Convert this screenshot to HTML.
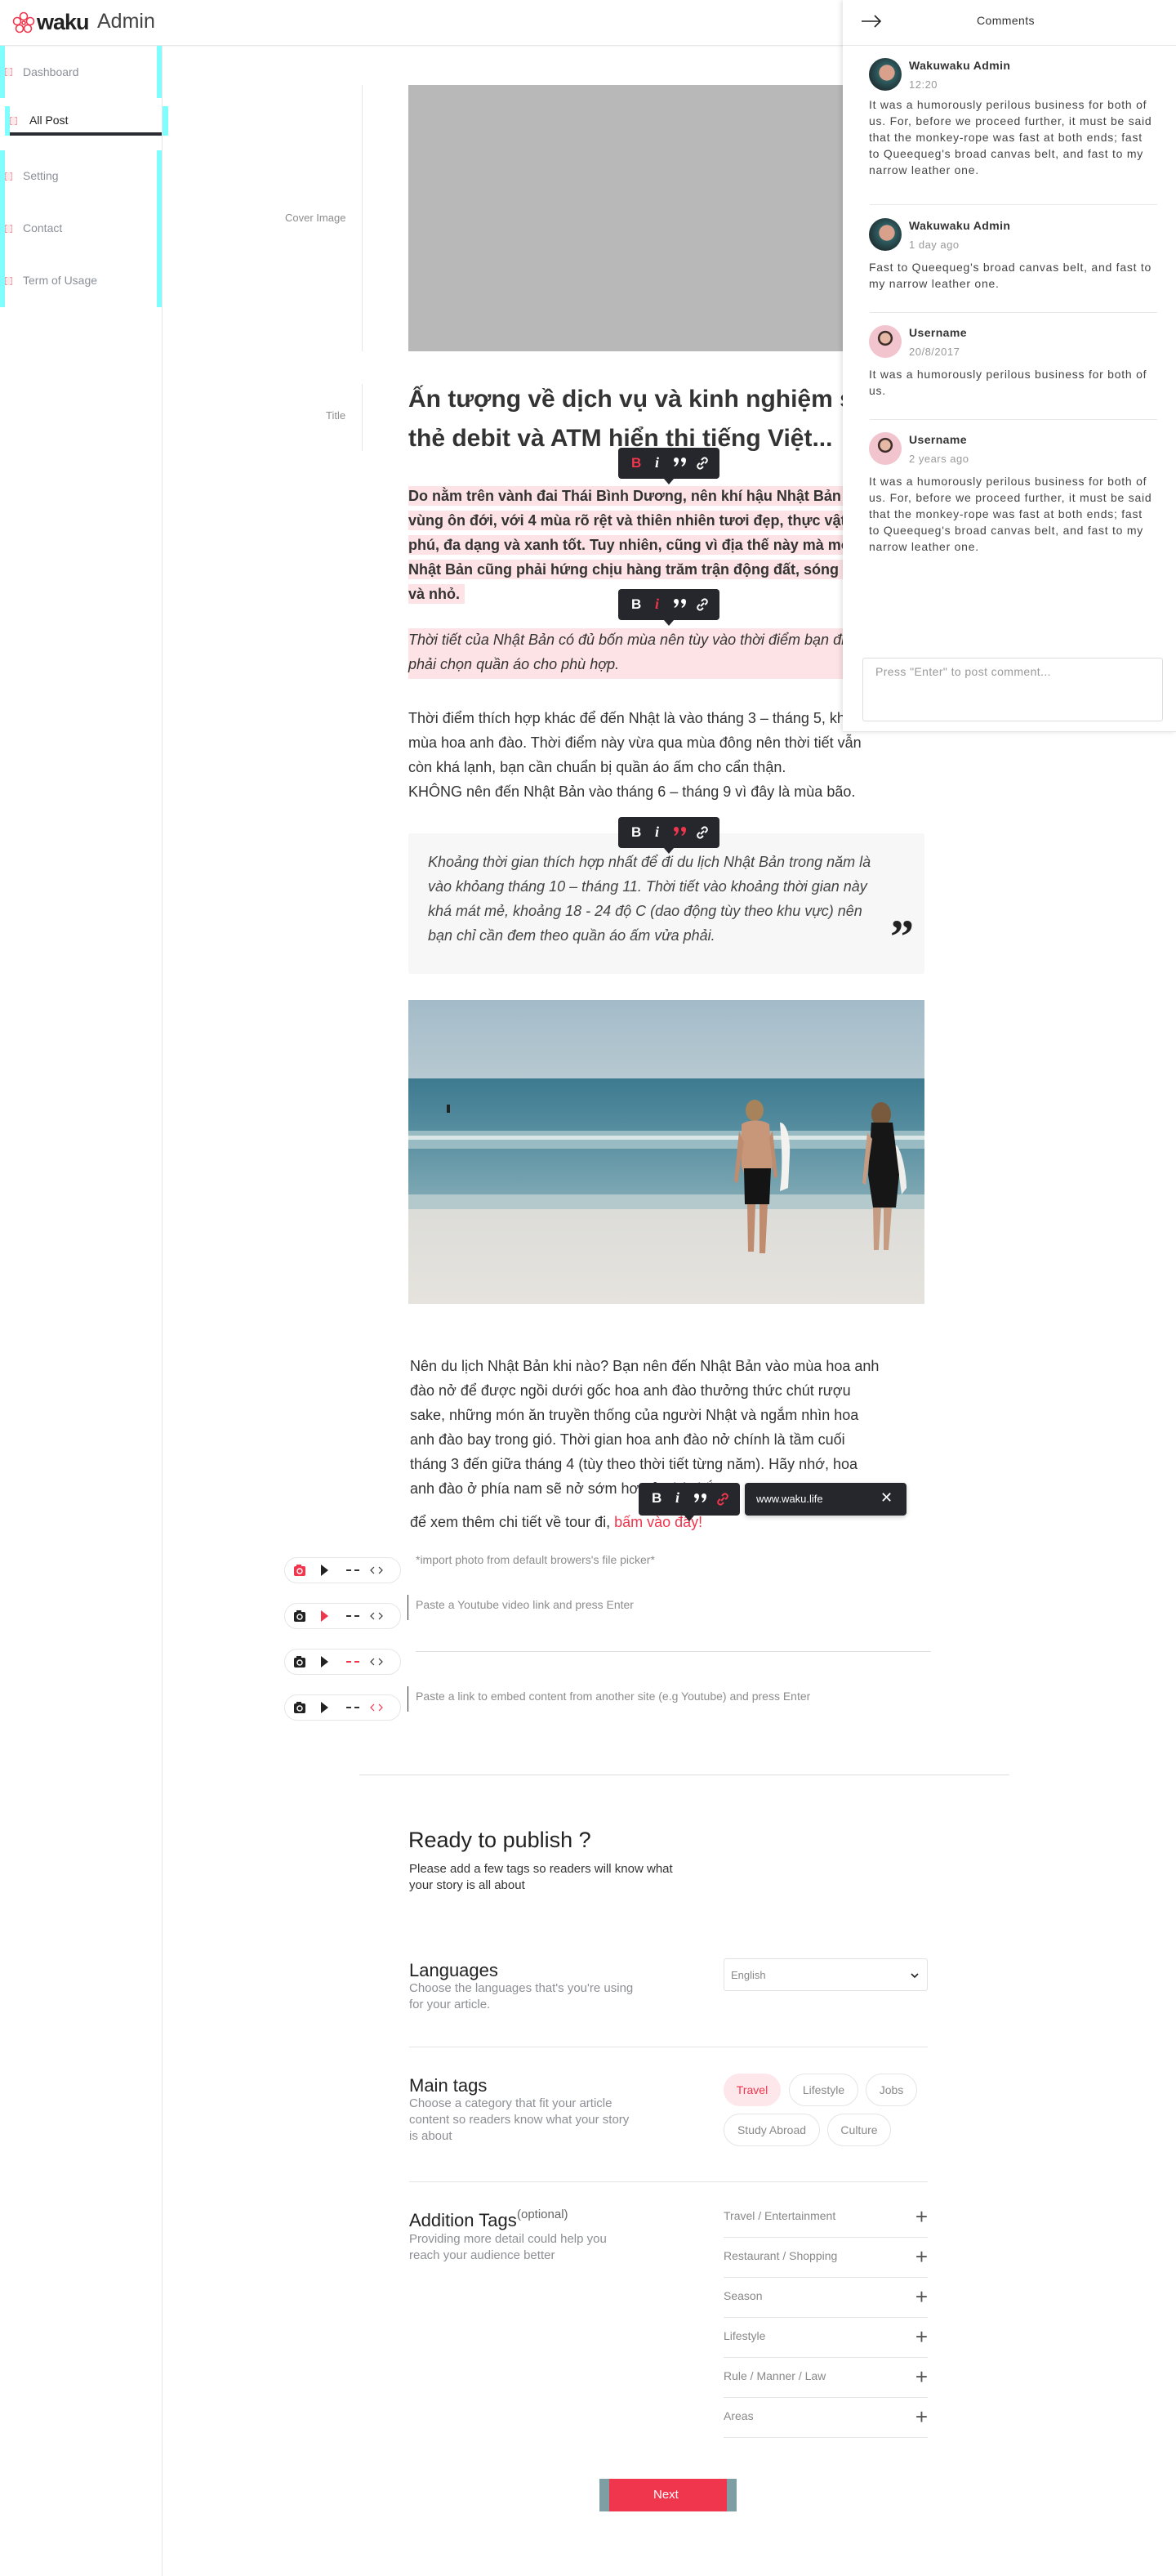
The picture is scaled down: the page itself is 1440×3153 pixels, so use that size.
<!DOCTYPE html>
<html><head><meta charset="utf-8">
<style>
*{margin:0;padding:0;box-sizing:border-box}
body{width:1440px;height:3153px;position:relative;background:#fff;font-family:"Liberation Sans",Arial,sans-serif;color:#333;overflow:hidden}
.a{position:absolute}
.nw{white-space:nowrap}
.nav{position:absolute;left:28px;font-size:14px;color:#8a8f98}
.ico{position:absolute;left:6px;width:9px;height:10px;border:1px dashed #f0a0a8;background:#fde8ea}
.cy{position:absolute;background:#80fefe}
.tb{position:absolute;width:124px;height:38px;background:#25272c;border-radius:4px;color:#fff}
.tb:after{content:"";position:absolute;left:56px;bottom:-7px;border-left:6px solid transparent;border-right:6px solid transparent;border-top:7px solid #25272c}
.tb .b{position:absolute;left:16px;top:9px;font-weight:bold;font-size:17px}
.tb .i{position:absolute;left:45px;top:8px;font-weight:bold;font-style:italic;font-size:18px;font-family:"Liberation Serif",serif}
.tb svg{position:absolute}
.red{color:#f0364d}
.p{position:absolute;left:500px;font-size:18px;line-height:30px;white-space:nowrap}
.pill{position:absolute;left:348px;width:143px;height:32px;border:1px solid #e6e6e6;border-radius:16px}
.rowtxt{position:absolute;left:509px;font-size:14px;color:#8d8d8d}
.h2{position:absolute;left:501px;font-size:22px;color:#222}
.desc{position:absolute;left:501px;font-size:15px;line-height:20px;color:#8d8f94}
.chip{position:absolute;height:40px;border:1px solid #e4e4e4;border-radius:20px;font-size:14px;color:#888;text-align:center;line-height:38px}
.li{position:absolute;left:886px;width:250px;height:49px;border-bottom:1px solid #e6e6e6;font-size:14px;color:#888}
.li span{position:absolute;left:0;top:14px}
.li i{position:absolute;right:0;top:8px;font-style:normal;font-size:26px;color:#555;font-weight:300}
.cm{position:absolute;left:1064px;width:360px}
.av{position:absolute;width:40px;height:40px;border-radius:50%;overflow:hidden}
.nm{position:absolute;left:49px;font-size:14px;color:#333;font-weight:bold;letter-spacing:.4px}
.tm{position:absolute;left:49px;font-size:13px;color:#999;letter-spacing:.5px}
.ct{position:absolute;left:0;font-size:14px;line-height:20px;color:#444;width:352px;letter-spacing:.75px}
.sep{position:absolute;left:1065px;width:352px;height:1px;background:#e8e8e8}
</style></head><body>

<!-- header -->
<div class="a" style="left:0;top:0;width:1440px;height:56px;border-bottom:1px solid #e8e8e8;box-shadow:0 1px 2px rgba(0,0,0,.05)"></div>
<svg class="a" style="left:15px;top:14px" width="28" height="28" viewBox="0 0 28 28" fill="none" stroke="#f0364d" stroke-width="1.6">
<circle cx="14" cy="6" r="4.5"/><circle cx="22" cy="12" r="4.5"/><circle cx="19" cy="21" r="4.5"/><circle cx="9" cy="21" r="4.5"/><circle cx="6" cy="12" r="4.5"/><circle cx="14" cy="14" r="2"/></svg>
<div class="a nw" style="left:45px;top:12px;font-size:27px;font-weight:bold;color:#222;letter-spacing:-1px">waku</div>
<div class="a nw" style="left:119px;top:12px;font-size:25px;color:#444;font-weight:300">Admin</div>

<!-- sidebar -->
<div class="a" style="left:198px;top:56px;width:1px;height:3097px;background:#e6e6e6"></div>
<div class="cy" style="left:0;top:56px;width:6px;height:64px"></div>
<div class="cy" style="left:192px;top:56px;width:6px;height:64px"></div>
<div class="cy" style="left:6px;top:130px;width:6px;height:36px"></div>
<div class="cy" style="left:199px;top:130px;width:7px;height:36px"></div>
<div class="cy" style="left:0;top:184px;width:6px;height:192px"></div>
<div class="cy" style="left:192px;top:184px;width:6px;height:192px"></div>
<div class="ico" style="top:83px"></div><div class="nav" style="top:80px">Dashboard</div>
<div class="ico" style="top:143px;left:12px"></div><div class="nav" style="top:139px;left:36px;color:#222">All Post</div>
<div class="a" style="left:12px;top:162px;width:186px;height:4px;background:#2b2d33"></div>
<div class="ico" style="top:211px"></div><div class="nav" style="top:207px">Setting</div>
<div class="ico" style="top:275px"></div><div class="nav" style="top:271px">Contact</div>
<div class="ico" style="top:339px"></div><div class="nav" style="top:335px">Term of Usage</div>

<!-- cover -->
<div class="a nw" style="left:349px;top:259px;font-size:13px;color:#8d8d8d">Cover Image</div>
<div class="a" style="left:443px;top:104px;width:1px;height:326px;background:#e6e6e6"></div>
<div class="a" style="left:500px;top:104px;width:632px;height:326px;background:#b8b8b8"></div>
<div class="a nw" style="left:399px;top:501px;font-size:13px;color:#8d8d8d">Title</div>
<div class="a" style="left:443px;top:470px;width:1px;height:82px;background:#e6e6e6"></div>
<div class="a nw" style="left:500px;top:465px;font-size:30px;line-height:48px;font-weight:bold;color:#333">Ấn tượng về dịch vụ và kinh nghiệm sử dụng<br>thẻ debit và ATM hiển thị tiếng Việt...</div>

<!-- pink para -->
<div class="p" style="top:592px;font-weight:bold"><span style="background:#fde3e5;padding:2px 6px 2px 0">Do nằm trên vành đai Thái Bình Dương, nên khí hậu Nhật Bản thuộc</span><br><span style="background:#fde3e5;padding:2px 6px 2px 0">vùng ôn đới, với 4 mùa rõ rệt và thiên nhiên tươi đẹp, thực vật phong</span><br><span style="background:#fde3e5;padding:2px 6px 2px 0">phú, đa dạng và xanh tốt. Tuy nhiên, cũng vì địa thế này mà mỗi năm</span><br><span style="background:#fde3e5;padding:2px 6px 2px 0">Nhật Bản cũng phải hứng chịu hàng trăm trận động đất, sóng thần lớn</span><br><span style="background:#fde3e5;padding:2px 6px 2px 0">và nhỏ.</span></div>

<div class="a" style="left:500px;top:769px;width:632px;height:62px;background:#fde3e5"></div>
<div class="p" style="top:768px;font-style:italic">Thời tiết của Nhật Bản có đủ bốn mùa nên tùy vào thời điểm bạn đi mà<br>phải chọn quần áo cho phù hợp.</div>

<div class="p" style="top:864px">Thời điểm thích hợp khác để đến Nhật là vào tháng 3 – tháng 5, khi vào<br>mùa hoa anh đào. Thời điểm này vừa qua mùa đông nên thời tiết vẫn<br>còn khá lạnh, bạn cần chuẩn bị quần áo ấm cho cẩn thận.<br>KHÔNG nên đến Nhật Bản vào tháng 6 – tháng 9 vì đây là mùa bão.</div>

<div class="a" style="left:500px;top:1020px;width:632px;height:172px;background:#f7f7f7;border-radius:3px"></div>
<div class="p" style="left:524px;top:1040px;font-style:italic;color:#444">Khoảng thời gian thích hợp nhất để đi du lịch Nhật Bản trong năm là<br>vào khỏang tháng 10 – tháng 11. Thời tiết vào khoảng thời gian này<br>khá mát mẻ, khoảng 18 - 24 độ C (dao động tùy theo khu vực) nên<br>bạn chỉ cần đem theo quần áo ấm vửa phải.</div>
<div class="a" style="left:1090px;top:1118px;font-family:'Liberation Serif',serif;font-size:58px;font-weight:bold;color:#222;line-height:58px">”</div>

<!-- toolbars -->
<div class="tb" style="left:757px;top:548px"><span class="b red">B</span><span class="i">i</span>
<svg style="left:68px;top:12px" width="16" height="14" viewBox="0 0 16 14" fill="#fff"><path d="M0 3a3 3 0 1 1 6 0c0 4-2 7-5 8l-.5-1.3C2 9 3 7.5 3 6A3 3 0 0 1 0 3zM9 3a3 3 0 1 1 6 0c0 4-2 7-5 8l-.5-1.3C11 9 12 7.5 12 6A3 3 0 0 1 9 3z"/></svg>
<svg style="left:95px;top:11px" width="16" height="16" viewBox="0 0 16 16" fill="none" stroke="#fff" stroke-width="2"><path d="M7 4l2-2a3 3 0 0 1 4.2 4.2l-2 2M9 12l-2 2A3 3 0 0 1 2.8 9.8l2-2M6 10l4-4"/></svg></div>

<div class="tb" style="left:757px;top:721px"><span class="b">B</span><span class="i red">i</span>
<svg style="left:68px;top:12px" width="16" height="14" viewBox="0 0 16 14" fill="#fff"><path d="M0 3a3 3 0 1 1 6 0c0 4-2 7-5 8l-.5-1.3C2 9 3 7.5 3 6A3 3 0 0 1 0 3zM9 3a3 3 0 1 1 6 0c0 4-2 7-5 8l-.5-1.3C11 9 12 7.5 12 6A3 3 0 0 1 9 3z"/></svg>
<svg style="left:95px;top:11px" width="16" height="16" viewBox="0 0 16 16" fill="none" stroke="#fff" stroke-width="2"><path d="M7 4l2-2a3 3 0 0 1 4.2 4.2l-2 2M9 12l-2 2A3 3 0 0 1 2.8 9.8l2-2M6 10l4-4"/></svg></div>

<div class="tb" style="left:757px;top:1000px"><span class="b">B</span><span class="i">i</span>
<svg style="left:68px;top:12px" width="16" height="14" viewBox="0 0 16 14" fill="#f0364d"><path d="M0 3a3 3 0 1 1 6 0c0 4-2 7-5 8l-.5-1.3C2 9 3 7.5 3 6A3 3 0 0 1 0 3zM9 3a3 3 0 1 1 6 0c0 4-2 7-5 8l-.5-1.3C11 9 12 7.5 12 6A3 3 0 0 1 9 3z"/></svg>
<svg style="left:95px;top:11px" width="16" height="16" viewBox="0 0 16 16" fill="none" stroke="#fff" stroke-width="2"><path d="M7 4l2-2a3 3 0 0 1 4.2 4.2l-2 2M9 12l-2 2A3 3 0 0 1 2.8 9.8l2-2M6 10l4-4"/></svg></div>

<!-- photo -->
<svg class="a" style="left:500px;top:1224px" width="632" height="372" viewBox="0 0 632 372">
<defs><linearGradient id="sky" x1="0" y1="0" x2="0" y2="1"><stop offset="0" stop-color="#a3bbc9"/><stop offset="1" stop-color="#b7c9d1"/></linearGradient>
<linearGradient id="sea" x1="0" y1="0" x2="0" y2="1"><stop offset="0" stop-color="#3d7a90"/><stop offset=".5" stop-color="#5e93a4"/><stop offset="1" stop-color="#88aeb8"/></linearGradient>
<linearGradient id="sand" x1="0" y1="0" x2="0" y2="1"><stop offset="0" stop-color="#dcdcd8"/><stop offset="1" stop-color="#e6e3de"/></linearGradient></defs>
<rect width="632" height="96" fill="url(#sky)"/>
<rect y="96" width="632" height="164" fill="url(#sea)"/>
<rect y="160" width="632" height="22" fill="#a9c6cb" opacity=".8"/>
<rect y="166" width="632" height="5" fill="#dbe6e6"/>
<rect y="238" width="632" height="22" fill="#b3c9cc"/>
<rect y="256" width="632" height="116" fill="url(#sand)"/>
<rect x="47" y="128" width="4" height="10" fill="#222"/>
<!-- man -->
<path d="M455 150c8 0 13 18 12 40l-2 40-10 4c4-30 2-60 0-84z" fill="#f3f2ee"/>
<ellipse cx="424" cy="135" rx="11" ry="13" fill="#a6835a"/>
<path d="M408 152c8-6 26-6 34 0l4 52-4 10h-30l-4-10z" fill="#c89779"/>
<path d="M405 160l-6 62 4 2 8-50zM446 160l6 56-4 2-6-50z" fill="#c08c6f"/>
<path d="M411 206h33l-2 44h-30z" fill="#141414"/>
<path d="M415 250h10l-2 58h-7zM430 250h10l-3 60h-7z" fill="#c08c6f"/>
<!-- woman -->
<path d="M598 178c8 10 12 40 12 52l-6 8-8-60z" fill="#efeeea"/>
<ellipse cx="579" cy="140" rx="12" ry="15" fill="#7a5a3c"/>
<path d="M567 150h26l8 64-4 40h-28l-6-40z" fill="#161616"/>
<path d="M562 162l-6 62 4 2 8-56z" fill="#c59b82"/>
<path d="M569 254h10l-3 52h-6zM582 254h10l-4 52h-6z" fill="#c59b82"/>
</svg>

<!-- last para -->
<div class="p" style="top:1657px;left:502px">Nên du lịch Nhật Bản khi nào? Bạn nên đến Nhật Bản vào mùa hoa anh<br>đào nở để được ngồi dưới gốc hoa anh đào thưởng thức chút rượu<br>sake, những món ăn truyền thống của người Nhật và ngắm nhìn hoa<br>anh đào bay trong gió. Thời gian hoa anh đào nở chính là tầm cuối<br>tháng 3 đến giữa tháng 4 (tùy theo thời tiết từng năm). Hãy nhớ, hoa<br>anh đào ở phía nam sẽ nở sớm hơn ở phía bắc.</div>
<div class="p" style="top:1848px;left:502px">để xem thêm chi tiết về tour đi, <span class="red">bấm vào đây!</span></div>

<div class="tb" style="left:782px;top:1815px;width:124px;height:40px"><span class="b">B</span><span class="i">i</span>
<svg style="left:68px;top:13px" width="16" height="14" viewBox="0 0 16 14" fill="#fff"><path d="M0 3a3 3 0 1 1 6 0c0 4-2 7-5 8l-.5-1.3C2 9 3 7.5 3 6A3 3 0 0 1 0 3zM9 3a3 3 0 1 1 6 0c0 4-2 7-5 8l-.5-1.3C11 9 12 7.5 12 6A3 3 0 0 1 9 3z"/></svg>
<svg style="left:95px;top:12px" width="16" height="16" viewBox="0 0 16 16" fill="none" stroke="#f0364d" stroke-width="2"><path d="M7 4l2-2a3 3 0 0 1 4.2 4.2l-2 2M9 12l-2 2A3 3 0 0 1 2.8 9.8l2-2M6 10l4-4"/></svg></div>
<div class="a" style="left:912px;top:1815px;width:198px;height:40px;background:#25272c;border-radius:4px;box-shadow:0 2px 6px rgba(0,0,0,.2)">
<span class="a nw" style="left:14px;top:12px;font-size:13px;color:#fff">www.waku.life</span>
<span class="a" style="left:166px;top:8px;font-size:18px;color:#fff">✕</span></div>

<!-- insert rows -->
<div class="pill" style="top:1906px"></div>
<div class="pill" style="top:1962px"></div>
<div class="pill" style="top:2018px"></div>
<div class="pill" style="top:2074px"></div>
<svg class="a" style="left:358px;top:1913px" width="140" height="18" viewBox="0 0 140 18">
<rect x="2" y="4" width="14" height="12" rx="2" fill="#f0364d"/><rect x="5" y="2" width="6" height="3" fill="#f0364d"/><circle cx="9" cy="10" r="3" fill="none" stroke="#fff" stroke-width="1.5"/>
<path d="M35 2l9 7-9 7z" fill="#222"/><path d="M66 9h6M76 9h6" stroke="#333" stroke-width="2"/>
<path d="M100 5l-4 4 4 4M106 5l4 4-4 4" fill="none" stroke="#333" stroke-width="1.2"/></svg>
<svg class="a" style="left:358px;top:1969px" width="140" height="18" viewBox="0 0 140 18">
<rect x="2" y="4" width="14" height="12" rx="2" fill="#222"/><rect x="5" y="2" width="6" height="3" fill="#222"/><circle cx="9" cy="10" r="3" fill="none" stroke="#fff" stroke-width="1.5"/>
<path d="M35 2l9 7-9 7z" fill="#f0364d"/><path d="M66 9h6M76 9h6" stroke="#333" stroke-width="2"/>
<path d="M100 5l-4 4 4 4M106 5l4 4-4 4" fill="none" stroke="#333" stroke-width="1.2"/></svg>
<svg class="a" style="left:358px;top:2025px" width="140" height="18" viewBox="0 0 140 18">
<rect x="2" y="4" width="14" height="12" rx="2" fill="#222"/><rect x="5" y="2" width="6" height="3" fill="#222"/><circle cx="9" cy="10" r="3" fill="none" stroke="#fff" stroke-width="1.5"/>
<path d="M35 2l9 7-9 7z" fill="#222"/><path d="M66 9h6M76 9h6" stroke="#f0364d" stroke-width="2"/>
<path d="M100 5l-4 4 4 4M106 5l4 4-4 4" fill="none" stroke="#333" stroke-width="1.2"/></svg>
<svg class="a" style="left:358px;top:2081px" width="140" height="18" viewBox="0 0 140 18">
<rect x="2" y="4" width="14" height="12" rx="2" fill="#222"/><rect x="5" y="2" width="6" height="3" fill="#222"/><circle cx="9" cy="10" r="3" fill="none" stroke="#fff" stroke-width="1.5"/>
<path d="M35 2l9 7-9 7z" fill="#222"/><path d="M66 9h6M76 9h6" stroke="#333" stroke-width="2"/>
<path d="M100 5l-4 4 4 4M106 5l4 4-4 4" fill="none" stroke="#f0364d" stroke-width="1.2"/></svg>
<div class="rowtxt nw" style="top:1901px">*import photo from default browers's file picker*</div>
<div class="a" style="left:499px;top:1952px;width:1px;height:31px;background:#333"></div>
<div class="rowtxt nw" style="top:1956px">Paste a Youtube video link and press Enter</div>
<div class="a" style="left:509px;top:2021px;width:631px;height:1px;background:#ddd"></div>
<div class="a" style="left:499px;top:2064px;width:1px;height:31px;background:#333"></div>
<div class="rowtxt nw" style="top:2068px">Paste a link to embed content from another site (e.g Youtube) and press Enter</div>

<div class="a" style="left:440px;top:2172px;width:796px;height:1px;background:#ddd"></div>

<!-- publish -->
<div class="a nw" style="left:500px;top:2237px;font-size:27px;font-weight:500;color:#222">Ready to publish ?</div>
<div class="desc nw" style="top:2278px;color:#333">Please add a few tags so readers will know what<br>your story is all about</div>

<div class="h2 nw" style="top:2399px">Languages</div>
<div class="desc nw" style="top:2424px">Choose the languages that's you're using<br>for your article.</div>
<div class="a" style="left:886px;top:2397px;width:250px;height:40px;border:1px solid #e2e2e2;border-radius:3px">
<span class="a" style="left:8px;top:12px;font-size:13px;color:#888">English</span>
<svg class="a" style="left:228px;top:16px" width="10" height="8" viewBox="0 0 10 8"><path d="M1 2l4 4 4-4" fill="none" stroke="#222" stroke-width="1.6"/></svg></div>
<div class="a" style="left:501px;top:2505px;width:635px;height:1px;background:#e4e4e4"></div>

<div class="h2 nw" style="top:2540px">Main tags</div>
<div class="desc nw" style="top:2565px">Choose a category that fit your article<br>content so readers know what your story<br>is about</div>
<div class="chip" style="left:886px;top:2538px;width:70px;background:#fde7ea;border-color:#fde7ea;color:#f0364d">Travel</div>
<div class="chip" style="left:966px;top:2538px;width:85px">Lifestyle</div>
<div class="chip" style="left:1060px;top:2538px;width:63px">Jobs</div>
<div class="chip" style="left:886px;top:2587px;width:118px">Study Abroad</div>
<div class="chip" style="left:1013px;top:2587px;width:78px">Culture</div>
<div class="a" style="left:501px;top:2670px;width:635px;height:1px;background:#e4e4e4"></div>

<div class="h2 nw" style="top:2705px">Addition Tags</div>
<div class="a nw" style="left:633px;top:2702px;font-size:15px;color:#666">(optional)</div>
<div class="desc nw" style="top:2731px">Providing more detail could help you<br>reach your audience better</div>
<div class="li" style="top:2690px"><span>Travel / Entertainment</span><i>+</i></div>
<div class="li" style="top:2739px"><span>Restaurant / Shopping</span><i>+</i></div>
<div class="li" style="top:2788px"><span>Season</span><i>+</i></div>
<div class="li" style="top:2837px"><span>Lifestyle</span><i>+</i></div>
<div class="li" style="top:2886px"><span>Rule / Manner / Law</span><i>+</i></div>
<div class="li" style="top:2935px"><span>Areas</span><i>+</i></div>

<div class="a" style="left:734px;top:3034px;width:168px;height:40px;background:#f0364d"></div>
<div class="a" style="left:734px;top:3034px;width:12px;height:40px;background:#7d9ea3"></div>
<div class="a" style="left:890px;top:3034px;width:12px;height:40px;background:#7d9ea3"></div>
<div class="a nw" style="left:800px;top:3045px;font-size:15px;color:#fff">Next</div>

<!-- comments panel -->
<div class="a" style="left:1032px;top:0;width:408px;height:896px;background:#fff;box-shadow:-2px 0 6px rgba(0,0,0,.12);border-bottom:1px solid #e4e4e4;z-index:5">
<div class="a" style="left:0;top:55px;width:408px;height:1px;background:#e6e6e6"></div>
<svg class="a" style="left:22px;top:18px" width="26" height="16" viewBox="0 0 26 16"><path d="M1 8h23M17 1l7 7-7 7" fill="none" stroke="#222" stroke-width="1.6"/></svg>
<div class="a nw" style="left:164px;top:17px;font-size:14px;color:#333;letter-spacing:.4px">Comments</div>
</div>
<div style="position:absolute;left:0;top:0;z-index:6">
<div class="sep" style="top:250px"></div><div class="sep" style="top:382px"></div><div class="sep" style="top:513px"></div>
<div class="cm" style="top:71px">
<div class="av" style="left:0;top:0;background:radial-gradient(circle at 55% 45%,#d9a08c 0 30%,#2f5f63 32%,#1e2d30 75%)"></div>
<div class="nm nw" style="top:1px">Wakuwaku Admin</div><div class="tm" style="top:25px">12:20</div>
<div class="ct" style="top:47px">It was a humorously perilous business for both of us. For, before we proceed further, it must be said that the monkey-rope was fast at both ends; fast to Queequeg's broad canvas belt, and fast to my narrow leather one.</div></div>
<div class="cm" style="top:267px">
<div class="av" style="left:0;top:0;background:radial-gradient(circle at 55% 45%,#d9a08c 0 30%,#2f5f63 32%,#1e2d30 75%)"></div>
<div class="nm nw" style="top:1px">Wakuwaku Admin</div><div class="tm" style="top:25px">1 day ago</div>
<div class="ct" style="top:50px">Fast to Queequeg's broad canvas belt, and fast to my narrow leather one.</div></div>
<div class="cm" style="top:398px">
<div class="av" style="left:0;top:0;background:radial-gradient(circle at 50% 40%,#e6b9a6 0 20%,#3b2c28 22% 28%,#f1c4ce 30%)"></div>
<div class="nm nw" style="top:1px">Username</div><div class="tm" style="top:25px">20/8/2017</div>
<div class="ct" style="top:50px">It was a humorously perilous business for both of us.</div></div>
<div class="cm" style="top:529px">
<div class="av" style="left:0;top:0;background:radial-gradient(circle at 50% 40%,#e6b9a6 0 20%,#3b2c28 22% 28%,#f1c4ce 30%)"></div>
<div class="nm nw" style="top:1px">Username</div><div class="tm" style="top:25px">2 years ago</div>
<div class="ct" style="top:50px">It was a humorously perilous business for both of us. For, before we proceed further, it must be said that the monkey-rope was fast at both ends; fast to Queequeg's broad canvas belt, and fast to my narrow leather one.</div></div>
<div class="a" style="left:1056px;top:805px;width:368px;height:78px;border:1px solid #ddd;border-radius:3px">
<span class="a nw" style="left:15px;top:8px;font-size:14px;color:#999;letter-spacing:.4px">Press "Enter" to post comment...</span></div>
</div>
</body></html>
